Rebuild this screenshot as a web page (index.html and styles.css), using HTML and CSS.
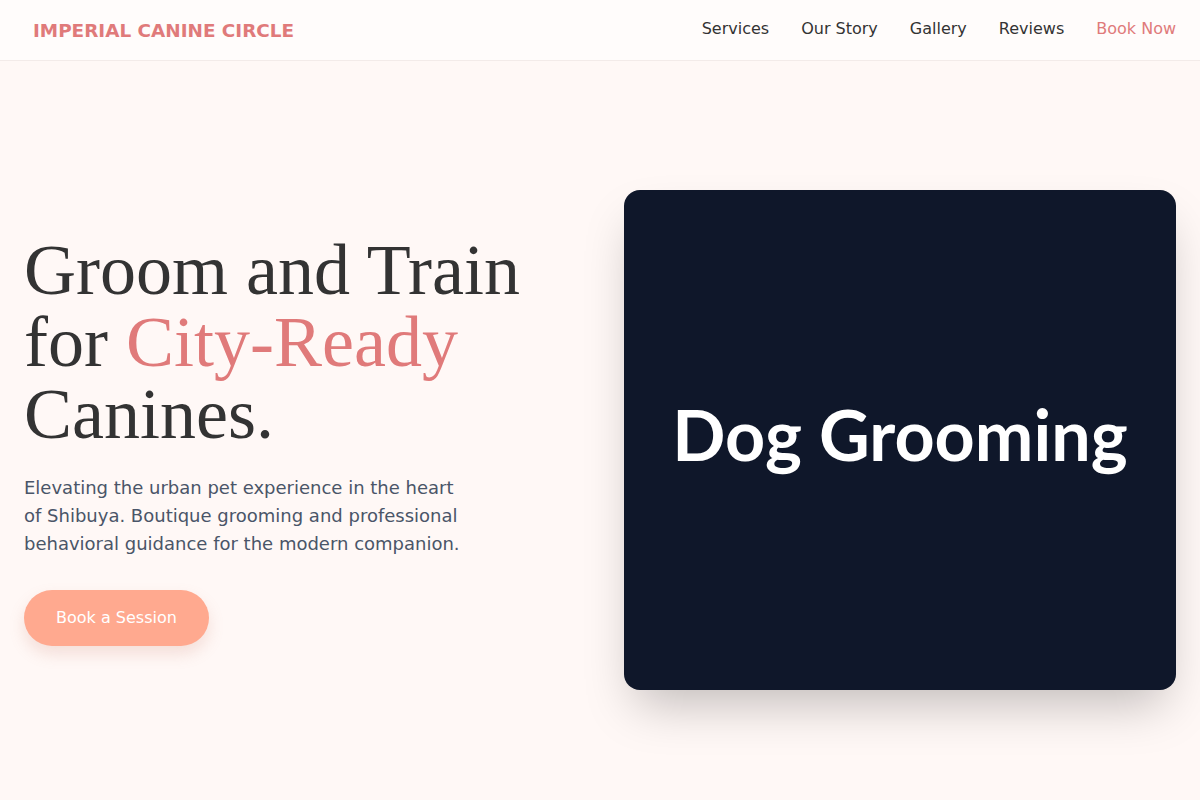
FILE: index.html
```html
<!DOCTYPE html>
<html lang="en">
<head>
<meta charset="utf-8">
<title>Imperial Canine Circle</title>
<link rel="stylesheet" href="styles.css">
</head>
<body>
<header class="site-header">
  <a class="logo" href="#">IMPERIAL CANINE CIRCLE</a>
  <nav class="nav">
    <a href="#">Services</a>
    <a href="#">Our Story</a>
    <a href="#">Gallery</a>
    <a href="#">Reviews</a>
    <a href="#" class="nav-cta">Book Now</a>
  </nav>
</header>
<main class="hero">
  <div class="hero-text">
    <h1 class="hero-title">Groom and Train for <span class="accent">City-Ready</span> Canines.</h1>
    <p class="hero-lead">Elevating the urban pet experience in the heart of Shibuya. Boutique grooming and professional behavioral guidance for the modern companion.</p>
    <a href="#" class="btn">Book a Session</a>
  </div>
  <div class="hero-card">
    <span class="card-label">Dog Grooming</span>
  </div>
</main>
</body>
</html>
```
FILE: styles.css
```css
* { box-sizing: border-box; }
html, body { margin: 0; padding: 0; }
body {
  background: #fff8f6;
  font-family: "DejaVu Sans", sans-serif;
  color: #333333;
}
a { text-decoration: none; }

.site-header {
  height: 61px;
  display: flex;
  align-items: center;
  justify-content: space-between;
  padding: 0 24px 0 33px;
  background: #fffcfb;
  border-bottom: 1px solid #f3ebe9;
}
.logo {
  font-weight: bold;
  font-size: 18.4px;
  color: #e07a7a;
}
.nav {
  display: flex;
  gap: 32px;
  padding-bottom: 4px;
}
.nav a {
  font-size: 16px;
  color: #333333;
}
.nav a.nav-cta { color: #e07a7a; }

.hero {
  display: grid;
  grid-template-columns: 1fr 1fr;
  gap: 48px;
  align-items: center;
  padding: 129px 24px 110px;
}
.hero-title {
  margin: 0;
  font-family: "Liberation Serif", serif;
  font-weight: normal;
  font-size: 72px;
  line-height: 1;
  color: #333333;
}
.accent { color: #e07a7a; }
.hero-lead {
  margin: 24px 0 32px;
  max-width: 442px;
  font-size: 18px;
  line-height: 28px;
  color: #4a5568;
}
.btn {
  display: inline-block;
  padding: 16px 32px;
  font-size: 16px;
  line-height: 24px;
  color: #ffffff;
  background: #ffa98f;
  border-radius: 999px;
  box-shadow: 0 8px 16px rgba(200, 120, 100, 0.2);
}
.hero-card {
  height: 500px;
  padding-bottom: 12px;
  background: #0f172a;
  border-radius: 16px;
  display: flex;
  align-items: center;
  justify-content: center;
  box-shadow: 0 25px 50px -12px rgba(0, 0, 0, 0.25);
}
.card-label {
  font-family: Lato, sans-serif;
  font-weight: bold;
  font-size: 70px;
  color: #ffffff;
}
```
